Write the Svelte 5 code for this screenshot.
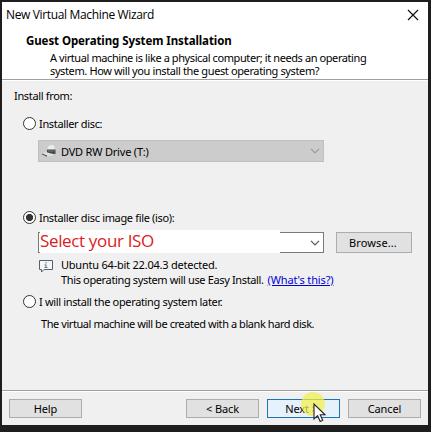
<script>
  let source = $state('iso');
</script>

{#snippet radio(value)}
  <button class="radio" class:on={source === value} aria-label={value} onclick={() => (source = value)}></button>
{/snippet}

{#snippet chevron()}
  <svg class="chevron" width="10" height="6" viewBox="0 0 10 6"><path d="M1 .8 5 4.800 9 .8" fill="none" stroke="currentColor" stroke-width="1.200" /></svg>
{/snippet}

<div class="screen">
  <div class="window">
    <header>
      <div class="titlebar">
        <span class="caption">New Virtual Machine Wizard</span>
        <svg width="12" height="12" viewBox="0 0 12 12"><path d="M1 1 11 11M11 1 1 11" stroke="#111" stroke-width="1.200" /></svg>
      </div>
      <h1>Guest Operating System Installation</h1>
      <div class="desc">
        <div class="d1">A virtual machine is like a physical computer; it needs an operating</div>
        <div class="d2">system. How will you install the guest operating system?</div>
      </div>
    </header>

    <main>
      <div class="from">Install from:</div>
      <div class="option disc">{@render radio('disc')}<span>Installer disc:</span></div>
      <div class="select">
        <svg width="15" height="14" viewBox="0 0 15 14">
          <path d="M5 6Q6 1 9.500 1Q13 1 13 6Z" fill="#e9eded" />
          <path d="M5 5.500H13.500V10L5 9.500Z" fill="#48494a" />
          <path d="M6 7H12.500" stroke="#777" />
          <path d="M0 9.500 4 8 12 10.500 10 12 5 12Z" fill="#dcdfdf" />
          <path d="M0 9.500 5 11.500V12.800L0 10.600Z" fill="#505354" />
        </svg>
        <span>DVD RW Drive (T:)</span>
        {@render chevron()}
      </div>

      <div class="option iso">{@render radio('iso')}<span>Installer disc image file (iso):</span></div>
      <div class="file">
        <div class="combo">
          <span class="note">Select your ISO</span>
          {@render chevron()}
        </div>
        <button class="btn browse">Browse...</button>
      </div>
      <div class="detected">
        <svg width="15" height="13" viewBox="0 0 15 13">
          <path d="M.5 .5V9.500H2.500V12L5 9.500H13.500V.5Z" fill="#f5f6f7" stroke="#53616c" />
          <path d="M7 2V3.500M7 4.500V8M5.500 5H7M5.500 7.500H8.500" stroke="#6e7780" />
        </svg>
        <div>
          <div class="ubuntu">Ubuntu 64-bit 22.04.3 detected.</div>
          <div class="easy"><span>This operating system will use Easy Install.</span><span class="link">(What's this?)</span></div>
        </div>
      </div>

      <div class="option later">{@render radio('later')}<span>I will install the operating system later.</span></div>
      <div class="blank">The virtual machine will be created with a blank hard disk.</div>
    </main>

    <footer>
      <button class="btn help">Help</button>
      <button class="btn">&lt; Back</button>
      <button class="btn next">Next &gt;
        <i class="halo"></i>
        <svg class="cursor" width="14" height="20" viewBox="0 0 14 20"><path d="M1 1V16L4.600 12.700 7.200 18.500 9.700 17.300 7.200 11.800H12Z" fill="#fff" stroke="#222" stroke-width="1.100" /></svg>
      </button>
      <button class="btn">Cancel</button>
    </footer>
  </div>
</div>

<style>
  :global(body) { background: #1e1e1e; overflow: hidden; }
  .screen { width: 431px; height: 432px; box-sizing: border-box; padding: 2px 3px 7px 2px; background: #1e1e1e; }
  .window { width: 426px; height: 423px; background: #f0f0f0; display: flex; flex-direction: column; font: 11px/15px 'Noto Sans', sans-serif; letter-spacing: -.34px; color: #000; white-space: nowrap; }
  svg { flex: none; display: block; }
  header { box-sizing: border-box; height: 78px; background: #fff; border-bottom: 1px solid #a0a0a0; box-shadow: 0 1px #fff; }
  .titlebar { height: 25px; display: flex; justify-content: space-between; align-items: center; padding: 0 9px 0 4px; }
  .caption { font: 12px/16px 'Open Sans', sans-serif; letter-spacing: -.35px; }
  h1 { margin: 6px 0 0 24px; font-size: 11.5px; line-height: 15px; font-weight: 700; letter-spacing: -.09px; }
  .desc { margin: 3px 0 0 48px; line-height: 13px; }
  .d1 { letter-spacing: -.41px; }
  .d2 { letter-spacing: -.38px; }
  main { height: 310px; }
  .from { padding: 8px 0 0 12px; }
  .option { display: flex; align-items: center; gap: 3px; height: 15px; padding-left: 21px; }
  .radio { width: 13px; height: 13px; padding: 0; border: 1px solid #333; border-radius: 50%; background: #fff; flex: none; }
  .radio.on { background: radial-gradient(circle, #333 0 3.3px, #fff 3.900px); }
  .disc { margin-top: 13px; }
  .select { box-sizing: border-box; width: 286px; height: 22px; margin: 9px 0 0 36px; border: 1px solid #bfbfbf; background: #ccc; display: flex; align-items: center; padding: 0 3px; letter-spacing: -.2px; }
  .select > span { margin-left: 4px; }
  .chevron { margin-left: auto; color: #999; }
  .iso { margin-top: 48px; }
  .file { display: flex; gap: 12px; margin: 7px 0 0 36px; }
  .combo { box-sizing: border-box; width: 286px; height: 21px; border: 1px solid #7a7a7a; background: #fff; display: flex; align-items: center; padding-right: 3px; position: relative; }
  .combo .chevron { color: #555; }
  .note { position: absolute; left: 1px; top: -3px; width: 240px; height: 23px; background: #fff; color: #dc2020; font: 17px/22px 'Open Sans', sans-serif; letter-spacing: -.35px; }
  .btn { box-sizing: border-box; width: 73px; height: 19px; padding: 0; border: 1px solid #adadad; background: #e1e1e1; font: inherit; line-height: 17px; letter-spacing: -.1px; color: #000; position: relative; }
  .browse { width: 76px; height: 21px; letter-spacing: .1px; text-indent: -2px; }
  .detected { display: flex; gap: 7px; margin: 4px 0 0 37px; }
  .detected > svg { margin-top: 3px; }
  .ubuntu { letter-spacing: -.22px; }
  .easy { display: flex; gap: 4px; letter-spacing: -.36px; }
  .link { color: #0000d8; text-decoration: underline; letter-spacing: -.15px; }
  .later { margin-top: 7px; }
  .blank { margin: 7px 0 0 39px; letter-spacing: -.43px; }
  footer { border-top: 1px solid #a0a0a0; box-shadow: inset 0 1px #fff; flex: 1; display: flex; gap: 8px; padding: 8px 7px 0; }
  .help { margin-right: auto; }
  .btn.next { border-color: #1874b5; background: #e5f1fb; text-indent: -4px; }
  .halo { position: absolute; left: 33px; top: -8px; width: 24px; height: 24px; border-radius: 50%; background: #f4f04ab8; }
  .cursor { position: absolute; left: 45px; top: 3px; }
</style>
